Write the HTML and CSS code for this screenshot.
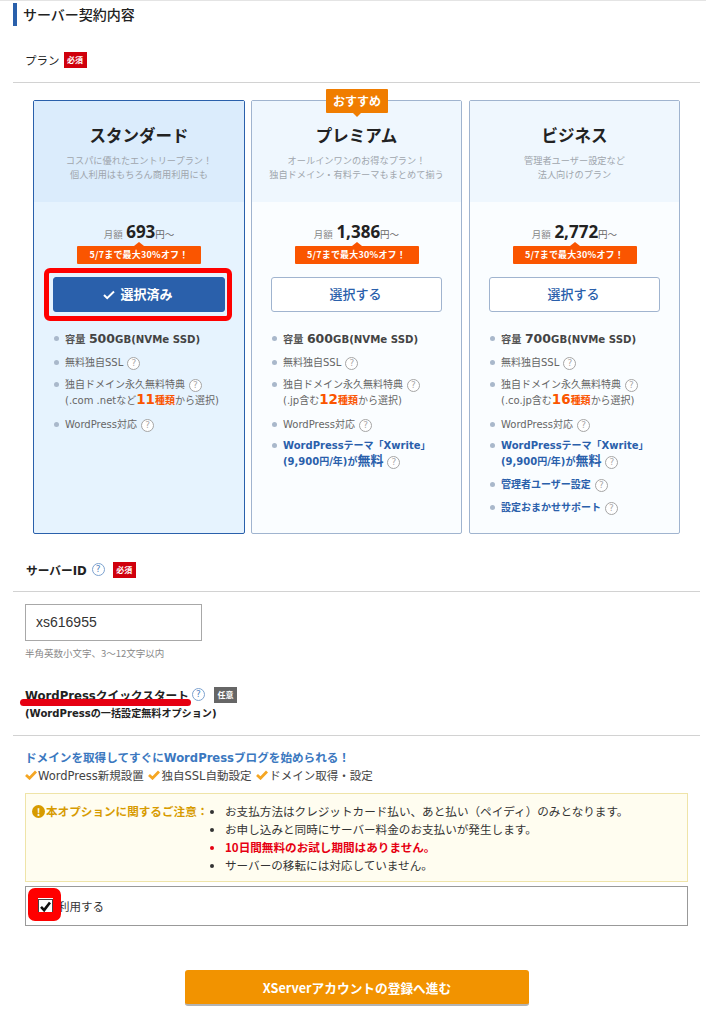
FILE: index.html
```html
<!DOCTYPE html>
<html lang="ja">
<head>
<meta charset="utf-8">
<title>サーバー契約内容</title>
<link rel="stylesheet" href="styles.css">
</head>
<body>
<main class="page">
  <h1 class="title">サーバー契約内容</h1>

  <div class="label-row plan-label">
    <span class="label plain">プラン</span><span class="badge req">必須</span>
  </div>

  <div class="plans">
    <section class="plan selected">
      <header class="plan-head">
        <h2>スタンダード</h2>
        <p>コスパに優れたエントリープラン！<br>個人利用はもちろん商用利用にも</p>
      </header>
      <div class="price"><span class="unit">月額</span> <b>693</b><span class="unit">円～</span></div>
      <div class="promo">5/7まで最大30%オフ！</div>
      <div class="btn-wrap">
        <button class="choose on"><svg class="tick" viewBox="0 0 12 10"><path d="M1 5l3.2 3.2L11 1.5" fill="none" stroke="#fff" stroke-width="2"/></svg>選択済み</button>
        <span class="mark mark-btn"></span>
      </div>
      <ul class="features">
        <li class="cap"><span class="k">容量</span> <span class="n">500</span>GB(NVMe SSD)</li>
        <li>無料独自SSL<i class="q">?</i></li>
        <li class="two">独自ドメイン永久無料特典<i class="q">?</i><br>(.com .netなど<em><span class="n">11</span>種類</em>から選択)</li>
        <li>WordPress対応<i class="q">?</i></li>
      </ul>
    </section>

    <section class="plan">
      <span class="reco">おすすめ</span>
      <header class="plan-head">
        <h2>プレミアム</h2>
        <p>オールインワンのお得なプラン！<br>独自ドメイン・有料テーマもまとめて揃う</p>
      </header>
      <div class="price"><span class="unit">月額</span> <b>1,386</b><span class="unit">円～</span></div>
      <div class="promo">5/7まで最大30%オフ！</div>
      <div class="btn-wrap"><button class="choose">選択する</button></div>
      <ul class="features">
        <li class="cap"><span class="k">容量</span> <span class="n">600</span>GB(NVMe SSD)</li>
        <li>無料独自SSL<i class="q">?</i></li>
        <li class="two">独自ドメイン永久無料特典<i class="q">?</i><br>(.jp含む<em><span class="n">12</span>種類</em>から選択)</li>
        <li>WordPress対応<i class="q">?</i></li>
        <li class="blue two">WordPressテーマ「Xwrite」<br>(9,900円/年)が<span class="big">無料</span><i class="q">?</i></li>
      </ul>
    </section>

    <section class="plan">
      <header class="plan-head">
        <h2>ビジネス</h2>
        <p>管理者ユーザー設定など<br>法人向けのプラン</p>
      </header>
      <div class="price"><span class="unit">月額</span> <b>2,772</b><span class="unit">円～</span></div>
      <div class="promo">5/7まで最大30%オフ！</div>
      <div class="btn-wrap"><button class="choose">選択する</button></div>
      <ul class="features">
        <li class="cap"><span class="k">容量</span> <span class="n">700</span>GB(NVMe SSD)</li>
        <li>無料独自SSL<i class="q">?</i></li>
        <li class="two">独自ドメイン永久無料特典<i class="q">?</i><br>(.co.jp含む<em><span class="n">16</span>種類</em>から選択)</li>
        <li>WordPress対応<i class="q">?</i></li>
        <li class="blue two">WordPressテーマ「Xwrite」<br>(9,900円/年)が<span class="big">無料</span><i class="q">?</i></li>
        <li class="blue">管理者ユーザー設定<i class="q">?</i></li>
        <li class="blue">設定おまかせサポート<i class="q">?</i></li>
      </ul>
    </section>
  </div>

  <div class="label-row id-label">
    <span class="label">サーバーID</span><i class="q help">?</i><span class="badge req">必須</span>
  </div>

  <div class="id-field">
    <div class="input">xs616955</div>
    <p class="hint">半角英数小文字、3～12文字以内</p>
  </div>

  <div class="wp-label">
    <div class="wp-line">
      <span class="label">WordPressクイックスタート</span><i class="q help">?</i><span class="badge opt">任意</span>
      <span class="underline"></span>
    </div>
    <div class="label sub">(WordPressの一括設定無料オプション)</div>
  </div>

  <div class="wp-intro">
    <p class="lead">ドメインを取得してすぐにWordPressブログを始められる！</p>
    <p class="checks">
      <span class="c"><svg class="ok" viewBox="0 0 12 10"><path d="M1 5l3.5 3.2L11 1.5" fill="none" stroke="#f5a623" stroke-width="2.8"/></svg>WordPress新規設置</span>
      <span class="c"><svg class="ok" viewBox="0 0 12 10"><path d="M1 5l3.5 3.2L11 1.5" fill="none" stroke="#f5a623" stroke-width="2.8"/></svg>独自SSL自動設定</span>
      <span class="c"><svg class="ok" viewBox="0 0 12 10"><path d="M1 5l3.5 3.2L11 1.5" fill="none" stroke="#f5a623" stroke-width="2.8"/></svg>ドメイン取得・設定</span>
    </p>
  </div>

  <div class="notice">
    <div class="notice-title"><span class="bang">!</span>本オプションに関するご注意：</div>
    <ul>
      <li>お支払方法はクレジットカード払い、あと払い（ペイディ）のみとなります。</li>
      <li>お申し込みと同時にサーバー料金のお支払いが発生します。</li>
      <li class="red">10日間無料のお試し期間はありません。</li>
      <li>サーバーの移転には対応していません。</li>
    </ul>
  </div>

  <div class="use">
    <span class="box"><svg viewBox="0 0 16 16"><path d="M2.5 8.5l3.8 4L13.5 3" fill="none" stroke="#111" stroke-width="3.2"/></svg></span>
    <span class="use-text">利用する</span>
    <span class="mark mark-check"></span>
  </div>

  <div class="submit-row"><button class="submit">XServerアカウントの登録へ進む</button></div>
</main>
</body>
</html>
```

FILE: styles.css
```css
* { box-sizing: border-box; }
html, body { margin: 0; padding: 0; background: #fff; }
body {
  font-family: "DejaVu Sans", "Noto Sans CJK JP", sans-serif;
  color: #333;
  font-size: 11px;
  width: 706px;
  height: 1032px;
  overflow: hidden;
}
.page { border-top: 1px solid #e4e4e4; padding: 2px 0 0 13px; height: 1032px; }
p, h1, h2, ul { margin: 0; padding: 0; }
ul { list-style: none; }

.title {
  border-left: 4px solid #2a60ab;
  padding-left: 6px;
  height: 23px;
  line-height: 23px;
  font-size: 14px;
  font-weight: 500;
  color: #222;
  font-family: "Noto Sans CJK JP", sans-serif;
}

.label-row { display: flex; align-items: center; border-bottom: 1px solid #d2d2d2; margin-right: 6px; }
.plan-label { height: 57px; padding: 12px 0 0 12px; margin-top: 0; }
.plan-label .badge { margin-left: 4px; }
.label { font-size: 11.7px; font-weight: 700; color: #222; }
.label.plain { font-weight: 400; font-size: 11.5px; font-family: "Noto Sans CJK JP", sans-serif; }
.badge {
  display: inline-block;
  width: 23px;
  height: 16px;
  line-height: 16px;
  margin-left: 5px;
  text-align: center;
  font-size: 8px;
  font-weight: 700;
  color: #fff;
  font-family: "Noto Sans CJK JP", sans-serif;
}
.req { background: #d0000c; }
.opt { background: #666; }

.plans {
  display: grid;
  grid-template-columns: 212px 211px 212px;
  column-gap: 6px;
  margin: 17px 0 0 20px;
  height: 434px;
}
.plan {
  position: relative;
  border: 1px solid #a0b4cf;
  border-radius: 2px;
  background: #fafdff;
  text-align: center;
}
.plan:last-child { margin-left: 1px; }
.plan.selected { border-color: #2a60ab; background: #e6f3fe; }
.plan-head { height: 101px; background: #eff7fe; padding-top: 21px; }
.selected .plan-head { background: #dbecfc; }
.plan-head h2 {
  font-family: "Noto Sans CJK JP", sans-serif;
  font-size: 16.5px;
  font-weight: 700;
  line-height: 26px;
  color: #222;
}
.plan-head p {
  margin-top: 5px;
  font-size: 9.2px;
  line-height: 14px;
  color: #a0a6ad;
  font-family: "Noto Sans CJK JP", sans-serif;
}
.reco {
  position: absolute;
  top: -12px;
  left: 74px;
  width: 62px;
  height: 24px;
  line-height: 23px;
  background: #f07d00;
  color: #fff;
  font-size: 12px;
  font-weight: 700;
  border-radius: 1px;
  font-family: "Noto Sans CJK JP", sans-serif;
}
.reco::after {
  content: "";
  position: absolute;
  left: 27px;
  bottom: -4px;
  border: 4px solid transparent;
  border-top-color: #f07d00;
  border-bottom: 0;
}
.price { margin-top: 18px; height: 24px; line-height: 24px; color: #222; }
.price b { font-size: 17px; font-weight: 700; font-family: "Open Sans", "DejaVu Sans", sans-serif; }
.unit { font-size: 9.5px; color: #888; font-family: "Noto Sans CJK JP", sans-serif; }
.unit:last-child { color: #666; }
.promo {
  position: relative;
  width: 124px;
  height: 18px;
  line-height: 18px;
  margin: 2px auto 0;
  background: #fa5500;
  border-radius: 1px;
  color: #fff;
  font-size: 9px;
  font-weight: 700;
  letter-spacing: .2px;
  font-family: "Noto Sans CJK JP", sans-serif;
}
.promo::before {
  content: "";
  position: absolute;
  left: 57px;
  top: -4px;
  border: 5px solid transparent;
  border-top: 0;
  border-bottom: 4px solid #fa5500;
}
.btn-wrap { position: relative; margin: 13px 19px 0; height: 35px; }
.choose {
  display: flex;
  align-items: center;
  justify-content: center;
  width: 100%;
  height: 35px;
  background: #fff;
  border: 1px solid #a0b4cf;
  border-radius: 3px;
  color: #2a60ab;
  font-size: 13px;
  font-weight: 500;
  padding: 0 2px 2px 0;
  font-family: "Noto Sans CJK JP", sans-serif;
}
.choose.on { background: #2a60ab; border-color: #2a60ab; color: #fff; font-weight: 700; }
.tick { width: 12px; height: 10px; margin: 2px 5px 0 0; }
.mark { position: absolute; border: 5px solid #f00; border-radius: 6px; pointer-events: none; }
.mark-btn { left: -9px; top: -9px; width: 188px; height: 53px; }

.features { margin: 19px 0 0 20px; text-align: left; font-size: 10px; color: #666; }
.features li { position: relative; padding-left: 11px; margin-bottom: 8px; line-height: 15px; white-space: nowrap; }
.features li:nth-child(2) { margin-bottom: 7px; }
.features li:nth-child(4) { margin-bottom: 6px; }
.features li:nth-child(5) { margin-bottom: 7px; }
.features li::before {
  content: "";
  position: absolute;
  left: 0;
  top: 5px;
  width: 5px;
  height: 5px;
  border-radius: 50%;
  background: #a9b8cb;
}
.features .cap { font-weight: 700; color: #444; font-size: 10.2px; }
.features .k { font-family: "Noto Sans CJK JP", sans-serif; color: #555; }
.features .n { font-size: 12.5px; line-height: 1; }
.features .two { line-height: 16px; }
.features em { font-style: normal; font-weight: 700; color: #fa5500; line-height: 1; }
.features em .n { font-size: 13.5px; }
.features .blue { font-weight: 700; color: #2a60ab; }
.features .big { font-size: 13px; line-height: 1; }
.q {
  display: inline-block;
  width: 13px;
  height: 13px;
  margin-left: 4px;
  border: 1px solid #a5a5a5;
  border-radius: 50%;
  background: #fff;
  color: #aaa;
  font-size: 9px;
  font-weight: 400;
  font-style: normal;
  line-height: 11px;
  text-align: center;
  vertical-align: 0;
}
.q.help { border-color: #7da2cf; color: #4f82bd; margin-left: 5px; }

.id-label { margin-top: 16px; height: 42px; padding: 0 0 2px 13px; }
.id-label .badge { margin-left: 8px; }
.id-field { padding: 12px 0 0 12px; }
.input {
  width: 177px;
  height: 37px;
  line-height: 35px;
  padding-left: 10px;
  border: 1px solid #a8a8a8;
  font-family: "Liberation Sans", sans-serif;
  font-size: 14px;
  color: #333;
}
.hint { margin-top: 5px; font-size: 9.5px; line-height: 14px; color: #888; font-family: "Noto Sans CJK JP", sans-serif; }

.wp-label { margin: 25px 6px 0 0; padding: 0 0 0 12px; height: 51px; border-bottom: 1px solid #d2d2d2; }
.wp-line { position: relative; display: flex; align-items: center; height: 19px; }
.wp-line .q { margin-left: 3px; }
.wp-line .badge { margin-left: 9px; }
.underline { position: absolute; left: -5px; top: 14px; width: 171px; height: 7px; border-radius: 4px; background: #e60012; }
.sub { font-size: 10.1px; line-height: 14px; margin-top: 3px; }

.wp-intro { padding: 14px 0 0 12px; line-height: 17px; }
.lead { font-size: 11.6px; font-weight: 700; color: #3b78bf; }
.checks { font-size: 11.5px; color: #444; margin-top: 1px; white-space: nowrap; }
.c { margin-right: 1px; }
.ok { width: 12px; height: 10px; margin-right: 1px; }

.notice {
  display: flex;
  width: 663px;
  height: 89px;
  margin: 8px 0 0 12px;
  padding: 8px 0 0 6px;
  background: #fffdf0;
  border: 1px solid #efe4a8;
  font-family: "Noto Sans CJK JP", sans-serif;
  font-size: 11.6px;
  color: #333;
}
.notice-title { width: 181px; font-weight: 700; color: #d79b00; line-height: 18px; white-space: nowrap; }
.bang {
  display: inline-block;
  width: 13px;
  height: 13px;
  margin-right: 1px;
  border-radius: 50%;
  background: #d79b00;
  color: #fffdf0;
  font-size: 10px;
  line-height: 13px;
  text-align: center;
}
.notice ul { list-style: disc; padding-left: 12px; line-height: 18px; }
.notice li { padding-left: 0; }
.red { color: #e60012; font-weight: 700; }

.use {
  position: relative;
  display: flex;
  align-items: center;
  width: 663px;
  height: 40px;
  margin: 4px 0 0 12px;
  padding-left: 12px;
  border: 1px solid #999;
  font-family: "Noto Sans CJK JP", sans-serif;
  font-size: 11.5px;
  color: #333;
}
.box { width: 15px; height: 15px; border: 1px solid #444; background: #fff; display: block; }
.box svg { display: block; width: 13px; height: 13px; }
.use-text { margin-left: 5px; }
.mark-check { left: 2px; top: 1px; width: 33px; height: 33px; border-width: 10px 8px 9px 10px; border-radius: 7px; }

.submit-row { margin: 44px 0 0 172px; }
.submit {
  display: block;
  width: 344px;
  height: 36px;
  border: 0;
  border-bottom: 2px solid #b3b3b3;
  border-radius: 3px;
  background: #f29300;
  color: #fff;
  font-family: "Noto Sans CJK JP", sans-serif;
  font-size: 12.7px;
  font-weight: 700;
  padding: 0;
}
```
